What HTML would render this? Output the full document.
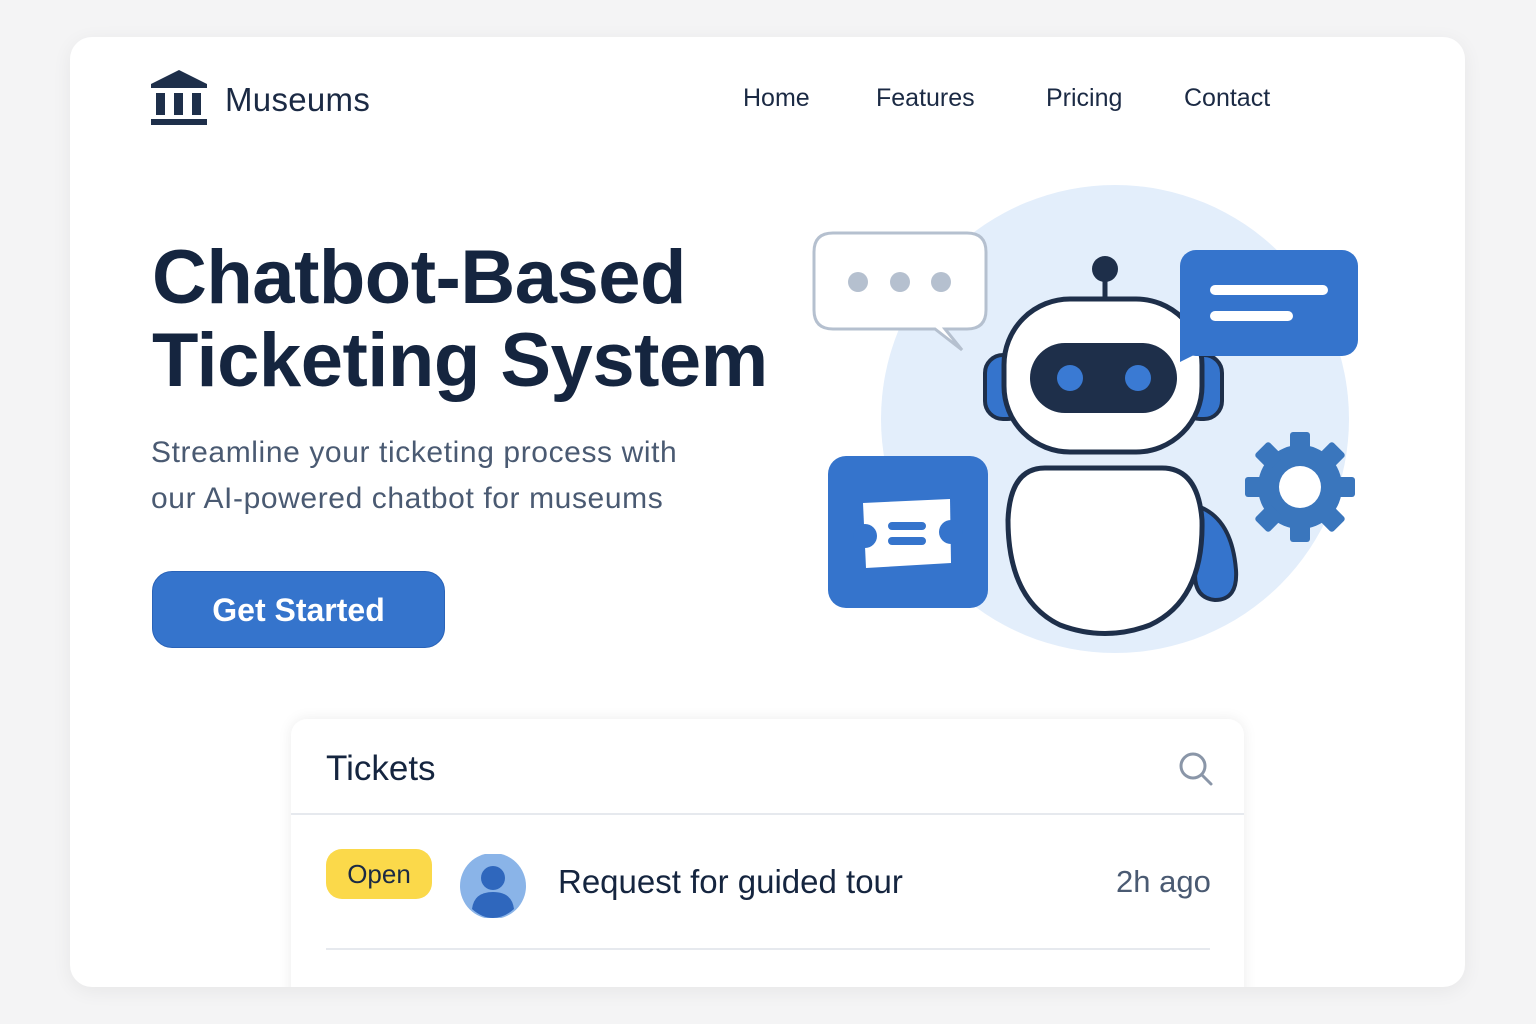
<!DOCTYPE html>
<html><head><style>
*{margin:0;padding:0;box-sizing:border-box}
body{width:1536px;height:1024px;background:#f4f4f5;font-family:"Liberation Sans",sans-serif;position:relative;overflow:hidden}
.card{position:absolute;left:70px;top:37px;width:1395px;height:950px;background:#fff;border-radius:22px;box-shadow:0 4px 20px rgba(0,0,0,.06);overflow:hidden}
.abs{position:absolute}
.nav{font-size:25px;color:#1b2a44;top:84px}
h1{position:absolute;left:152px;top:236px;font-size:76px;line-height:83px;color:#15253f;font-weight:bold;letter-spacing:-0.5px}
.sub{left:151px;top:430px;font-size:30px;line-height:46px;color:#4a5a72;letter-spacing:0.6px}
.btn{left:152px;top:571px;width:293px;height:77px;background:#3574cc;border-radius:20px;color:#fff;font-size:32px;font-weight:bold;text-align:center;line-height:77px;border:1px solid #2a63b8}
.panel{left:291px;top:719px;width:953px;height:300px;background:#fff;border-radius:16px;box-shadow:0 0 14px rgba(0,0,0,.08)}
</style></head><body>
<div class="card"></div>
<svg class="abs" style="left:150px;top:69px" width="58" height="58" viewBox="0 0 58 58">
<path d="M29 1 L57 15 L57 19 L1 19 L1 15Z" fill="#1e2f4a"/>
<rect x="6" y="24" width="9" height="22" fill="#1e2f4a"/><rect x="24" y="24" width="9" height="22" fill="#1e2f4a"/><rect x="42" y="24" width="9" height="22" fill="#1e2f4a"/>
<rect x="1" y="50" width="56" height="6" fill="#1e2f4a"/></svg>
<div class="abs" style="left:225px;top:81px;font-size:33px;color:#1b2a44;letter-spacing:0.3px">Museums</div>
<div class="abs nav" style="left:743px">Home</div>
<div class="abs nav" style="left:876px">Features</div>
<div class="abs nav" style="left:1046px">Pricing</div>
<div class="abs nav" style="left:1184px">Contact</div>
<h1>Chatbot-Based<br>Ticketing System</h1>
<div class="abs sub">Streamline your ticketing process with<br>our AI-powered chatbot for museums</div>
<div class="abs btn">Get Started</div>
<svg class="abs" style="left:0;top:0" width="1536" height="720">
<circle cx="1115" cy="419" r="234" fill="#e3eefb"/>
<path d="M833 233 H967 Q986 233 986 252 V310 Q986 329 967 329 H945 L962 350 L935 329 H833 Q814 329 814 310 V252 Q814 233 833 233Z" fill="#fff" stroke="#b5c0cf" stroke-width="3"/>
<circle cx="858" cy="282" r="10" fill="#b5c0cf"/><circle cx="900" cy="282" r="10" fill="#b5c0cf"/><circle cx="941" cy="282" r="10" fill="#b5c0cf"/>
<rect x="985" y="355" width="40" height="64" rx="18" fill="#3574cc" stroke="#1e2f4a" stroke-width="4"/>
<rect x="1182" y="355" width="40" height="64" rx="18" fill="#3574cc" stroke="#1e2f4a" stroke-width="4"/>
<line x1="1105" y1="272" x2="1105" y2="300" stroke="#1e2f4a" stroke-width="5"/>
<circle cx="1105" cy="269" r="13" fill="#1e2f4a"/>
<rect x="1004" y="299" width="198" height="153" rx="66" fill="#fff" stroke="#1e2f4a" stroke-width="5"/>
<rect x="1030" y="343" width="147" height="70" rx="35" fill="#1e2f4a"/>
<circle cx="1070" cy="378" r="13" fill="#3a7ad3"/><circle cx="1138" cy="378" r="13" fill="#3a7ad3"/>
<path d="M1200 507 Q1232 520 1236 570 Q1238 600 1215 600 Q1195 598 1195 575 Z" fill="#3574cc" stroke="#1e2f4a" stroke-width="4"/>
<path d="M1045 468 H1162 Q1198 468 1202 520 Q1204 600 1150 625 Q1105 642 1060 625 Q1008 600 1008 520 Q1010 468 1045 468Z" fill="#fff" stroke="#1e2f4a" stroke-width="5"/>
<rect x="1180" y="250" width="178" height="106" rx="16" fill="#3574cc"/>
<path d="M1180 330 L1180 362 L1200 352Z" fill="#3574cc"/>
<rect x="1210" y="285" width="118" height="10" rx="5" fill="#fff"/><rect x="1210" y="311" width="83" height="10" rx="5" fill="#fff"/>
<rect x="828" y="456" width="160" height="152" rx="18" fill="#3574cc"/>
<path d="M863 503 L950 499 L951 563 L866 568Z" fill="#fff"/>
<circle cx="865" cy="536" r="12" fill="#3574cc"/><circle cx="951" cy="532" r="12" fill="#3574cc"/>
<rect x="888" y="522" width="38" height="8" rx="4" fill="#3574cc"/><rect x="888" y="537" width="38" height="8" rx="4" fill="#3574cc"/>
<g transform="translate(1300 487)" fill="#3a76bd">
<circle r="42"/>
<g id="t"><rect x="-10" y="-55" width="20" height="22" rx="3"/></g>
<use href="#t" transform="rotate(45)"/><use href="#t" transform="rotate(90)"/><use href="#t" transform="rotate(135)"/><use href="#t" transform="rotate(180)"/><use href="#t" transform="rotate(225)"/><use href="#t" transform="rotate(270)"/><use href="#t" transform="rotate(315)"/>
<circle r="21" fill="#fff"/></g>
</svg>
<div class="abs" style="left:0;top:0;width:1536px;height:987px;overflow:hidden">
<div class="abs panel">
<div class="abs" style="left:35px;top:30px;font-size:35px;color:#15253f">Tickets</div>
<svg class="abs" style="left:887px;top:32px" width="36" height="36"><circle cx="15" cy="15" r="12" fill="none" stroke="#8a96a8" stroke-width="3"/><line x1="24" y1="24" x2="33" y2="33" stroke="#8a96a8" stroke-width="3" stroke-linecap="round"/></svg>
<div class="abs" style="left:0;top:94px;width:953px;height:2px;background:#e6e9ee"></div>
<div class="abs" style="left:35px;top:130px;width:106px;height:50px;background:#fbd94a;border-radius:16px;font-size:26px;color:#1b2a44;text-align:center;line-height:50px">Open</div>
<svg class="abs" style="left:169px;top:135px" width="68" height="64"><circle cx="33" cy="32" r="33" fill="#8ab4e8"/><circle cx="33" cy="24" r="12" fill="#2f67bd"/><path d="M12 55 Q14 38 33 38 Q52 38 54 55 Q44 64 33 64 Q22 64 12 55Z" fill="#2f67bd"/></svg>
<div class="abs" style="left:267px;top:144px;font-size:33px;color:#15253f">Request for guided tour</div>
<div class="abs" style="left:825px;top:145px;font-size:31px;color:#4a5a72">2h ago</div>
<div class="abs" style="left:35px;top:229px;width:884px;height:2px;background:#e6e9ee"></div>
</div></div>
</body></html>
